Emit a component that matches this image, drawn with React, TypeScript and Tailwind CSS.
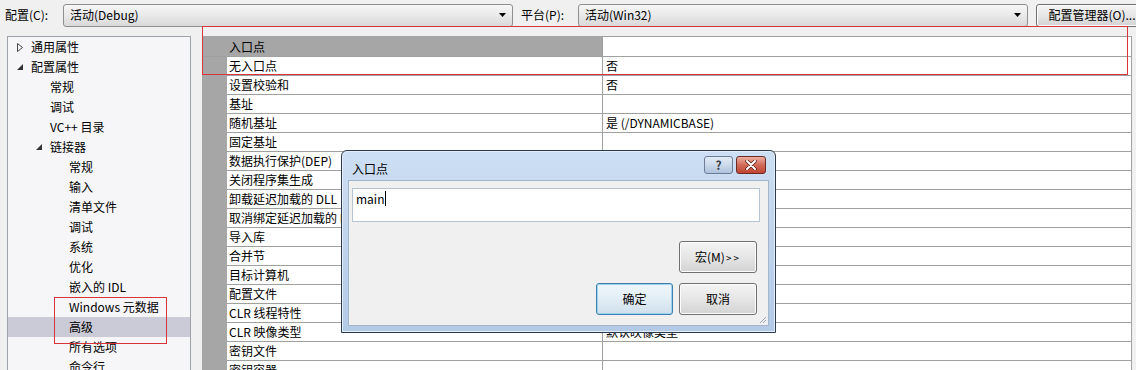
import React from "react";

type TreeItem = {
  text: string;
  level: 0 | 1 | 2;
  expander?: "open" | "closed";
  selected?: boolean;
};

const treeItems: TreeItem[] = [
  { text: "通用属性", level: 0, expander: "closed" },
  { text: "配置属性", level: 0, expander: "open" },
  { text: "常规", level: 1 },
  { text: "调试", level: 1 },
  { text: "VC++ 目录", level: 1 },
  { text: "链接器", level: 1, expander: "open" },
  { text: "常规", level: 2 },
  { text: "输入", level: 2 },
  { text: "清单文件", level: 2 },
  { text: "调试", level: 2 },
  { text: "系统", level: 2 },
  { text: "优化", level: 2 },
  { text: "嵌入的 IDL", level: 2 },
  { text: "Windows 元数据", level: 2 },
  { text: "高级", level: 2, selected: true },
  { text: "所有选项", level: 2 },
  { text: "命令行", level: 2 },
];

const indent = ["pl-[9px]", "pl-[28px]", "pl-[47px]"];

const gridRows: [string, string][] = [
  ["无入口点", "否"],
  ["设置校验和", "否"],
  ["基址", ""],
  ["随机基址", "是 (/DYNAMICBASE)"],
  ["固定基址", ""],
  ["数据执行保护(DEP)", "是 (/NXCOMPAT)"],
  ["关闭程序集生成", ""],
  ["卸载延迟加载的 DLL", ""],
  ["取消绑定延迟加载的 DLL", ""],
  ["导入库", ""],
  ["合并节", ""],
  ["目标计算机", ""],
  ["配置文件", "否"],
  ["CLR 线程特性", ""],
  ["CLR 映像类型", "默认映像类型"],
  ["密钥文件", ""],
  ["密钥容器", ""],
];

function ComboBox({ value, width }: { value: string; width: string }) {
  return (
    <div className={`${width} shrink-0 h-[23px] flex items-center justify-between pl-[6px] pr-[6px] border border-[#8e8f8f] rounded-[3px] bg-gradient-to-b from-[#f6f6f6] via-[#e9e9e9] to-[#d9d9d9]`}>
      <span className="leading-[16px]">{value}</span>
      <svg width="7" height="4" viewBox="0 0 7 4">
        <polygon points="0,0 7,0 3.5,4" fill="#000" />
      </svg>
    </div>
  );
}

function WinButton({ label, focused, className, children }: { label?: string; focused?: boolean; className?: string; children?: React.ReactNode }) {
  return (
    <div
      className={`${className ?? ""} flex items-center justify-center rounded-[3px] border ${
        focused
          ? "border-[#3c7fb1] bg-gradient-to-b from-[#eef6fb] via-[#e2eef6] to-[#cfdfea] shadow-[inset_0_0_0_1px_#9fd2f0]"
          : "border-[#707070] bg-gradient-to-b from-[#f4f4f4] via-[#e6e6e6] to-[#d3d3d3] shadow-[inset_0_0_0_1px_#fcfcfc]"
      }`}
    >
      <span className="leading-[16px] whitespace-nowrap">{label}{children}</span>
    </div>
  );
}

function Triangle({ kind }: { kind: "open" | "closed" }) {
  if (kind === "closed") {
    return (
      <svg width="6" height="9" viewBox="0 0 6 9">
        <polygon points="0.5,0.5 5.5,4.5 0.5,8.5" fill="none" stroke="#444" strokeWidth="1" />
      </svg>
    );
  }
  return (
    <svg width="6" height="6" viewBox="0 0 6 6">
      <polygon points="6,0 6,6 0,6" fill="#333" />
    </svg>
  );
}

function EntryDialog() {
  return (
    <div className="absolute left-[341px] top-[150px] w-[435px] h-[183px] flex flex-col border border-[#2b3a4d] rounded-t-[6px] bg-gradient-to-b from-[#cddff3] via-[#bfd3ec] to-[#b3cae6] shadow-[inset_0_0_0_1px_#e4eefa]">
      <div className="h-[29px] flex items-center justify-between pl-[10px] pr-[9px]">
        <span className="leading-[16px] mt-[6px]">入口点</span>
        <div className="flex gap-[3px] mt-[-1px]">
          <div className="w-[29px] h-[18px] flex items-center justify-center rounded-[3px] border border-[#6d7d95] bg-gradient-to-b from-[#e3ecf7] via-[#cbd9ea] to-[#adc2dc]">
            <span className="text-[12px] leading-[12px] font-bold text-[#3a3f48]">?</span>
          </div>
          <div className="w-[30px] h-[18px] flex items-center justify-center rounded-[3px] border border-[#6b2a22] bg-gradient-to-b from-[#eab0a2] via-[#d26a58] to-[#c0442f]">
            <svg width="12" height="10" viewBox="0 0 12 10">
              <path d="M2 1 L10 9 M10 1 L2 9" stroke="#5a1a12" strokeWidth="3.4" strokeLinecap="round" />
              <path d="M2 1 L10 9 M10 1 L2 9" stroke="#fff" strokeWidth="2" strokeLinecap="round" />
            </svg>
          </div>
        </div>
      </div>
      <div className="relative flex-1 mx-[6px] mb-[6px] bg-[#f0f0f0] border border-[#a3b6cc] flex flex-col">
        <div className="mt-[7px] ml-[3px] w-[408px] h-[34px] bg-white border border-[#b5c3d2] flex items-start pl-[3px] pt-[3px]">
          <span className="leading-[14px]">main</span>
          <span className="w-[1px] h-[15px] bg-black mt-[-1px]" />
        </div>
        <div className="flex flex-col items-end pr-[11px]">
          <WinButton label="宏(M)" className="mt-[19px] w-[78px] h-[32px]">
            <span className="text-[10px] tracking-[2px] ml-[1px]">&gt;&gt;</span>
          </WinButton>
          <div className="mt-[10px] flex gap-[6px]">
            <WinButton label="确定" focused className="w-[77px] h-[32px]" />
            <WinButton label="取消" className="w-[78px] h-[32px]" />
          </div>
        </div>
        <svg className="absolute right-[1px] bottom-[1px]" width="9" height="9" viewBox="0 0 9 9">
          <path d="M8 2 L2 8 M8 5 L5 8" stroke="#9aa7b6" strokeWidth="1" />
        </svg>
      </div>
    </div>
  );
}

export default function App() {
  return (
    <div className="relative w-[1136px] h-[370px] overflow-hidden bg-[#f0f0f0] text-[12px] text-black font-['Noto_Sans_CJK_SC','Noto_Sans',sans-serif]">
      {/* toolbar */}
      <div className="h-[29px] flex items-center pl-[5px] pt-[1px]">
        <span className="w-[58px] shrink-0 leading-[16px]">配置(C):</span>
        <ComboBox value="活动(Debug)" width="w-[450px]" />
        <span className="ml-[8px] w-[57px] shrink-0 leading-[16px]">平台(P):</span>
        <ComboBox value="活动(Win32)" width="w-[450px]" />
        <WinButton label="配置管理器(O)..." className="ml-[8px] w-[112px] h-[23px] shrink-0" />
      </div>

      <div className="flex mt-[7px]">
        {/* property tree */}
        <div className="ml-[7px] w-[184px] h-[360px] border border-[#9ea3ab] bg-[#f6f6f8] shrink-0">
          {treeItems.map((item, i) => (
            <div
              key={i}
              className={`h-[20px] flex items-center ${indent[item.level]} ${item.selected ? "bg-[#cbcbd8]" : ""}`}
            >
              <div className="w-[14px] flex items-center">
                {item.expander && <Triangle kind={item.expander} />}
              </div>
              <span className="leading-[16px] whitespace-nowrap">{item.text}</span>
            </div>
          ))}
        </div>

        {/* property grid */}
        <div className="ml-[11px] w-[930px] h-[360px] border-r border-[#a0a0a0] bg-white shrink-0 flex flex-col">
          <div className="h-[21px] shrink-0 flex border-b border-[#a0a0a0]">
            <div className="w-[400px] bg-[#a6a6a6] pl-[27px] pt-[1px] flex items-center">
              <span className="leading-[16px]">入口点</span>
            </div>
            <div className="flex-1 border-l border-t border-[#a0a0a0]" />
          </div>
          {gridRows.map(([name, value], i) => (
            <div key={i} className="h-[19px] flex shrink-0">
              <div className="w-[25px] bg-[#a6a6a6]" />
              <div className="w-[375px] border-b border-[#a0a0a0] pl-[2px] flex items-center">
                <span className="leading-[16px] whitespace-nowrap">{name}</span>
              </div>
              <div className="flex-1 border-l border-b border-[#a0a0a0] pl-[3px] flex items-center">
                <span className="leading-[16px] whitespace-nowrap">{value}</span>
              </div>
            </div>
          ))}
        </div>
      </div>

      {/* red annotation boxes */}
      <div className="absolute left-[202px] top-[26px] w-[926px] h-[49px] border border-[#d9343c]" />
      <div className="absolute left-[54px] top-[297px] w-[113px] h-[47px] border border-[#d9343c]" />

      <EntryDialog />
    </div>
  );
}
